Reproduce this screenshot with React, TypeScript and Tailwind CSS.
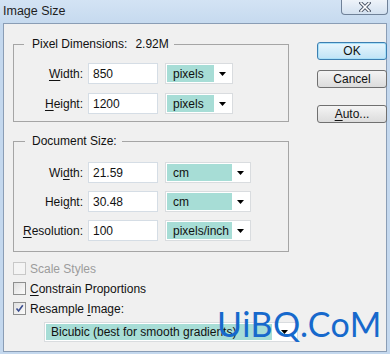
import React from 'react';

const U = ({ children }: { children: React.ReactNode }) => (
  <span className="underline underline-offset-[2px] decoration-1">{children}</span>
);

const Arrow = () => (
  <svg width="7" height="4" viewBox="0 0 7 4">
    <path d="M0 0h7L3.5 4z" fill="#000" />
  </svg>
);

const Select = ({ value, w, tealW }: { value: string; w: string; tealW: string }) => (
  <div className={`${w} h-[21px] ml-[7px] flex items-stretch border border-[#d9dcdf] bg-white p-[1px]`}>
    <div className={`${tealW} bg-[#a7ddd6] pl-[6px] flex items-center`}>{value}</div>
    <div className="flex-1 flex items-center justify-center">
      <Arrow />
    </div>
  </div>
);

const Row = ({
  label,
  value,
  unit,
  selW,
  tealW,
}: {
  label: React.ReactNode;
  value: string;
  unit: string;
  selW: string;
  tealW: string;
}) => (
  <div className="flex items-center h-[21px]">
    <div className="w-[69px] text-right">{label}</div>
    <div className="ml-[5px] w-[70px] h-[21px] border border-[#d5dde5] bg-white pl-[4px] flex items-center">
      {value}
    </div>
    <Select value={unit} w={selW} tealW={tealW} />
  </div>
);

const Check = ({ checked, disabled }: { checked?: boolean; disabled?: boolean }) => (
  <div
    className={`w-[13px] h-[13px] border flex items-center justify-center ${
      disabled
        ? 'border-[#c8c8c8] bg-[#f4f4f4]'
        : 'border-[#8e8f8f] bg-gradient-to-br from-[#e0e0e0] to-[#fbfbfb]'
    }`}
  >
    {checked && (
      <svg width="9" height="9" viewBox="0 0 9 9">
        <path d="M1.5 4.5 L3.6 7 L7.8 1.2" fill="none" stroke="#3a4d8f" strokeWidth="1.6" />
      </svg>
    )}
  </div>
);

const Btn = ({ children, primary, cls }: { children: React.ReactNode; primary?: boolean; cls?: string }) => (
  <div
    className={`w-[70px] h-[18px] rounded-[3px] border flex items-center justify-center ${cls ?? ''} ${
      primary
        ? 'border-[#3c7fb1] bg-gradient-to-b from-[#e8f6fd] to-[#bfe3f6] shadow-[inset_0_0_0_1px_#a9e0f8]'
        : 'border-[#707070] bg-gradient-to-b from-[#f4f4f4] to-[#dcdcdc]'
    }`}
  >
    {children}
  </div>
);

export default function App() {
  return (
    <div className="w-[390px] h-[354px] bg-[#c4d8ee] flex flex-col text-[12px] text-[#111] font-['Liberation_Sans',Arial,sans-serif] relative overflow-hidden">
      {/* title bar */}
      <div className="h-[23px] flex justify-between bg-gradient-to-b from-[#d3e3f4] to-[#c6daef]">
        <div className="pl-[3px] pt-[4px] text-[12.5px] leading-[15px] text-[#1e1e1e]">Image Size</div>
        <div className="w-[47px] h-[15px] mr-[2px] border border-t-0 border-[#6f8198] rounded-b-[4px] bg-gradient-to-b from-[#eef3f9] to-[#d3e1f0] flex items-center justify-center">
          <svg width="12" height="10" viewBox="0 0 12 10">
            <path d="M2 1 L10 9 M10 1 L2 9" stroke="#4a5466" strokeWidth="3.4" strokeLinecap="square" />
            <path d="M2 1 L10 9 M10 1 L2 9" stroke="#fff" strokeWidth="1.6" strokeLinecap="square" />
          </svg>
        </div>
      </div>

      {/* content */}
      <div className="flex-1 mx-[3px] mb-[2px] border border-[#8a9db5] bg-[#f0f0f0] flex">
        <div className="pl-[9px] flex flex-col">
          <fieldset className="mt-[13px] w-[276px] border border-[#a5a5a5] pt-[12px] pb-[7px] flex flex-col gap-[9px]">
            <legend className="ml-[10px] pl-[8px] pr-[5px] leading-[14px]">
              Pixel Dimensions:<span className="ml-[8px]">2.92M</span>
            </legend>
            <Row label={<><U>W</U>idth:</>} value="850" unit="pixels" selW="w-[68px]" tealW="w-[47px]" />
            <Row label={<><U>H</U>eight:</>} value="1200" unit="pixels" selW="w-[68px]" tealW="w-[47px]" />
          </fieldset>

          <fieldset className="mt-[12px] w-[276px] border border-[#a5a5a5] pt-[14px] pb-[10px] flex flex-col gap-[8px]">
            <legend className="ml-[11px] pl-[7px] pr-[5px] leading-[14px]">Document Size:</legend>
            <Row label={<>Wi<U>d</U>th:</>} value="21.59" unit="cm" selW="w-[86px]" tealW="w-[65px]" />
            <Row label={<>Hei<U>g</U>ht:</>} value="30.48" unit="cm" selW="w-[86px]" tealW="w-[65px]" />
            <Row label={<><U>R</U>esolution:</>} value="100" unit="pixels/inch" selW="w-[86px]" tealW="w-[65px]" />
          </fieldset>

          <div className="mt-[10px] flex flex-col gap-[7px]">
            <div className="flex items-center h-[13px] gap-[4px] text-[#9c9c9c]">
              <Check disabled />
              <span>Scale Styles</span>
            </div>
            <div className="flex items-center h-[13px] gap-[4px]">
              <Check />
              <span><U>C</U>onstrain Proportions</span>
            </div>
            <div className="flex items-center h-[13px] gap-[4px]">
              <Check checked />
              <span>Resample <U>I</U>mage:</span>
            </div>
          </div>

          <div className="mt-[7px] ml-[31px] w-[254px] h-[20px] flex items-stretch border border-[#d9dcdf] bg-white p-[1px]">
            <div className="w-[226px] bg-[#a7ddd6] pl-[5px] flex items-center overflow-hidden whitespace-nowrap">
              Bicubic (best for smooth gradients)
            </div>
            <div className="flex-1 flex items-center justify-center">
              <Arrow />
            </div>
          </div>
        </div>

        <div className="ml-[19px] pt-[18px] flex flex-col">
          <Btn primary>OK</Btn>
          <Btn cls="mt-[10px]">Cancel</Btn>
          <Btn cls="mt-[17px]">
            <U>A</U>uto...
          </Btn>
        </div>
      </div>

      {/* watermark */}
      <div className="absolute left-[217px] top-[305px] text-[34px] leading-[38px] text-[#1769cc] font-['Lato',sans-serif] tracking-[0.5px]">
        UiBQ.CoM
      </div>
    </div>
  );
}
